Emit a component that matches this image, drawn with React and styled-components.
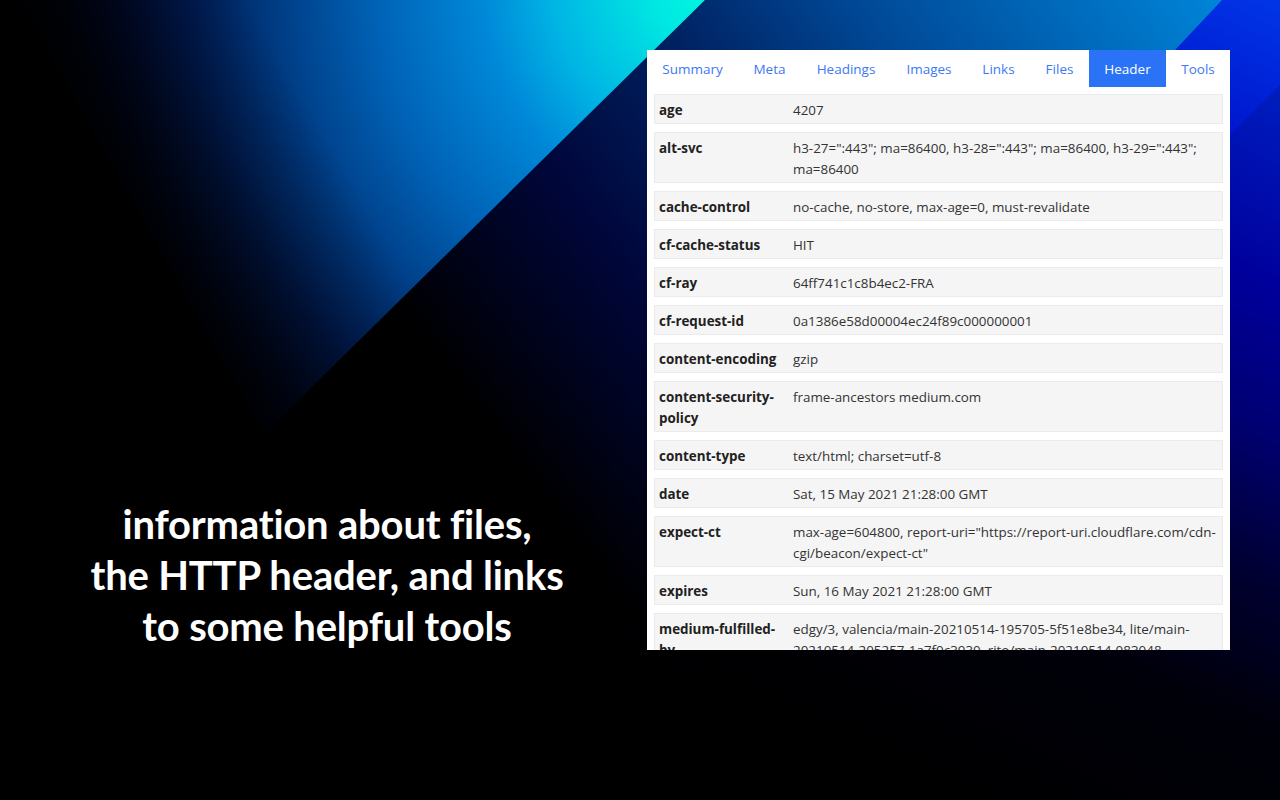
import React from 'react';
import styled, { createGlobalStyle } from 'styled-components';

const GlobalStyle = createGlobalStyle`
    html, body {
        margin: 0;
        padding: 0;
        background: #000;
    }
    * {
        box-sizing: border-box;
    }
`;

const tabs = [
    { label: 'Summary', w: 91 },
    { label: 'Meta', w: 63 },
    { label: 'Headings', w: 90 },
    { label: 'Images', w: 76 },
    { label: 'Links', w: 63 },
    { label: 'Files', w: 59 },
    { label: 'Header', w: 77, active: true },
    { label: 'Tools', w: 64 }
];

const headers = [
    ['age', '4207'],
    ['alt-svc', 'h3-27=":443"; ma=86400, h3-28=":443"; ma=86400, h3-29=":443"; ma=86400'],
    ['cache-control', 'no-cache, no-store, max-age=0, must-revalidate'],
    ['cf-cache-status', 'HIT'],
    ['cf-ray', '64ff741c1c8b4ec2-FRA'],
    ['cf-request-id', '0a1386e58d00004ec24f89c000000001'],
    ['content-encoding', 'gzip'],
    ['content-security-policy', 'frame-ancestors medium.com'],
    ['content-type', 'text/html; charset=utf-8'],
    ['date', 'Sat, 15 May 2021 21:28:00 GMT'],
    ['expect-ct', 'max-age=604800, report-uri="https://report-uri.cloudflare.com/cdn-cgi/beacon/expect-ct"'],
    ['expires', 'Sun, 16 May 2021 21:28:00 GMT'],
    ['medium-fulfilled-by', 'edgy/3, valencia/main-20210514-195705-5f51e8be34, lite/main-20210514-205257-1a7f0c3930, rito/main-20210514-083048-2ef4a1e0b3, tutu/main-20210514-161617-c12b2a3d1f'],
    ['server', 'cloudflare'],
    ['vary', 'Accept-Encoding']
];

const Stage = styled.div`
    position: relative;
    width: 1280px;
    height: 800px;
    overflow: hidden;
    background: #000;
`;

// decorative artwork sits underneath the page content
const Backdrop = styled.svg`
    position: absolute;
    top: 0;
    left: 0;
    display: block;
`;

const Content = styled.div`
    position: relative;
    display: flex;
    height: 100%;
`;

const Pitch = styled.div`
    width: 647px;
    flex-shrink: 0;
    padding-left: 7px;
    padding-top: 499px;
`;

const Headline = styled.h1`
    margin: 0;
    color: #fff;
    text-align: center;
    font-family: Lato, "Open Sans", sans-serif;
    font-weight: 700;
    font-size: 40px;
    line-height: 51px;
    letter-spacing: -0.2px;
`;

const Panel = styled.div`
    margin-top: 50px;
    width: 583px;
    height: 600px;
    background: #fff;
    overflow: hidden;
    font-family: "Open Sans", "Noto Sans", sans-serif;
    font-size: 13.4px;
    line-height: 21px;
`;

const TabBar = styled.nav`
    display: flex;
`;

const Tab = styled.a`
    width: ${p => p.$w}px;
    padding: 9px 0 7px;
    text-align: center;
    font-size: 13.5px;
    color: ${p => p.$active ? '#fff' : '#3d78f4'};
    background: ${p => p.$active ? '#2b73f6' : 'transparent'};
    cursor: pointer;
`;

const Table = styled.div`
    padding: 7px 7px 0;
`;

const Row = styled.div`
    display: grid;
    grid-template-columns: 134px 1fr;
    margin-bottom: 8px;
    background: #f5f5f5;
    border: 1px solid #ebebeb;
`;

const Key = styled.div`
    padding: 4.5px 4px 2.5px;
    font-weight: 700;
    color: #212121;
`;

const Value = styled.div`
    padding: 4.5px 2px 2.5px 4px;
    color: #333;
    word-break: break-word;
`;

function Artwork() {
    return (
        <Backdrop width="1280" height="800" viewBox="0 0 1280 800">
            <defs>
                <linearGradient id="band" gradientUnits="userSpaceOnUse" x1="1240" y1="0" x2="560" y2="520">
                    <stop offset="0" stopColor="#0088dc" />
                    <stop offset="0.35" stopColor="#004a98" />
                    <stop offset="0.55" stopColor="#002262" />
                    <stop offset="0.76" stopColor="#00063a" />
                    <stop offset="1" stopColor="#000000" />
                </linearGradient>
                <linearGradient id="side" gradientUnits="userSpaceOnUse" x1="1280" y1="0" x2="900" y2="800">
                    <stop offset="0" stopColor="#0036e6" />
                    <stop offset="0.15" stopColor="#0018d0" />
                    <stop offset="0.3" stopColor="#0000b0" />
                    <stop offset="0.45" stopColor="#000080" />
                    <stop offset="0.6" stopColor="#000038" />
                    <stop offset="0.75" stopColor="#00000c" />
                    <stop offset="1" stopColor="#000000" />
                </linearGradient>
                <radialGradient id="beam" gradientUnits="userSpaceOnUse" cx="720" cy="-20" r="680">
                    <stop offset="0" stopColor="#00fae0" />
                    <stop offset="0.1" stopColor="#00e8e2" />
                    <stop offset="0.25" stopColor="#00b4e4" />
                    <stop offset="0.35" stopColor="#0088d8" />
                    <stop offset="0.5" stopColor="#0064b8" />
                    <stop offset="0.62" stopColor="#004590" />
                    <stop offset="0.78" stopColor="#001c58" />
                    <stop offset="0.9" stopColor="#000a30" />
                    <stop offset="1" stopColor="#000414" />
                </radialGradient>
                <linearGradient id="fade" gradientUnits="userSpaceOnUse" x1="142" y1="216" x2="316" y2="118">
                    <stop offset="0" stopColor="#000" stopOpacity="0.9" />
                    <stop offset="0.6" stopColor="#000" stopOpacity="0.3" />
                    <stop offset="1" stopColor="#000" stopOpacity="0" />
                </linearGradient>
            </defs>
            <rect width="1280" height="800" fill="#000" />
            <polygon points="705,0 1280,0 1280,800 -115,800" fill="url(#band)" />
            <polygon points="1222,0 1280,0 1280,800 470,800" fill="url(#side)" />
            <polygon points="1280,85 1280,800 565,800" fill="#000" opacity="0.12" />
            <polygon points="20,0 705,0 265,433" fill="url(#beam)" />
            <polygon points="20,0 705,0 265,433" fill="url(#fade)" />
        </Backdrop>
    );
}

export default function App() {
    return (
        <Stage>
            <GlobalStyle />
            <Artwork />
            <Content>
                <Pitch>
                    <Headline>
                        information about files,<br />
                        the HTTP header, and links<br />
                        to some helpful tools
                    </Headline>
                </Pitch>
                <Panel>
                    <TabBar>
                        {tabs.map(t => (
                            <Tab key={t.label} $w={t.w} $active={t.active}>{t.label}</Tab>
                        ))}
                    </TabBar>
                    <Table>
                        {headers.map(([k, v]) => (
                            <Row key={k}>
                                <Key>{k}</Key>
                                <Value>{v}</Value>
                            </Row>
                        ))}
                    </Table>
                </Panel>
            </Content>
        </Stage>
    );
}
